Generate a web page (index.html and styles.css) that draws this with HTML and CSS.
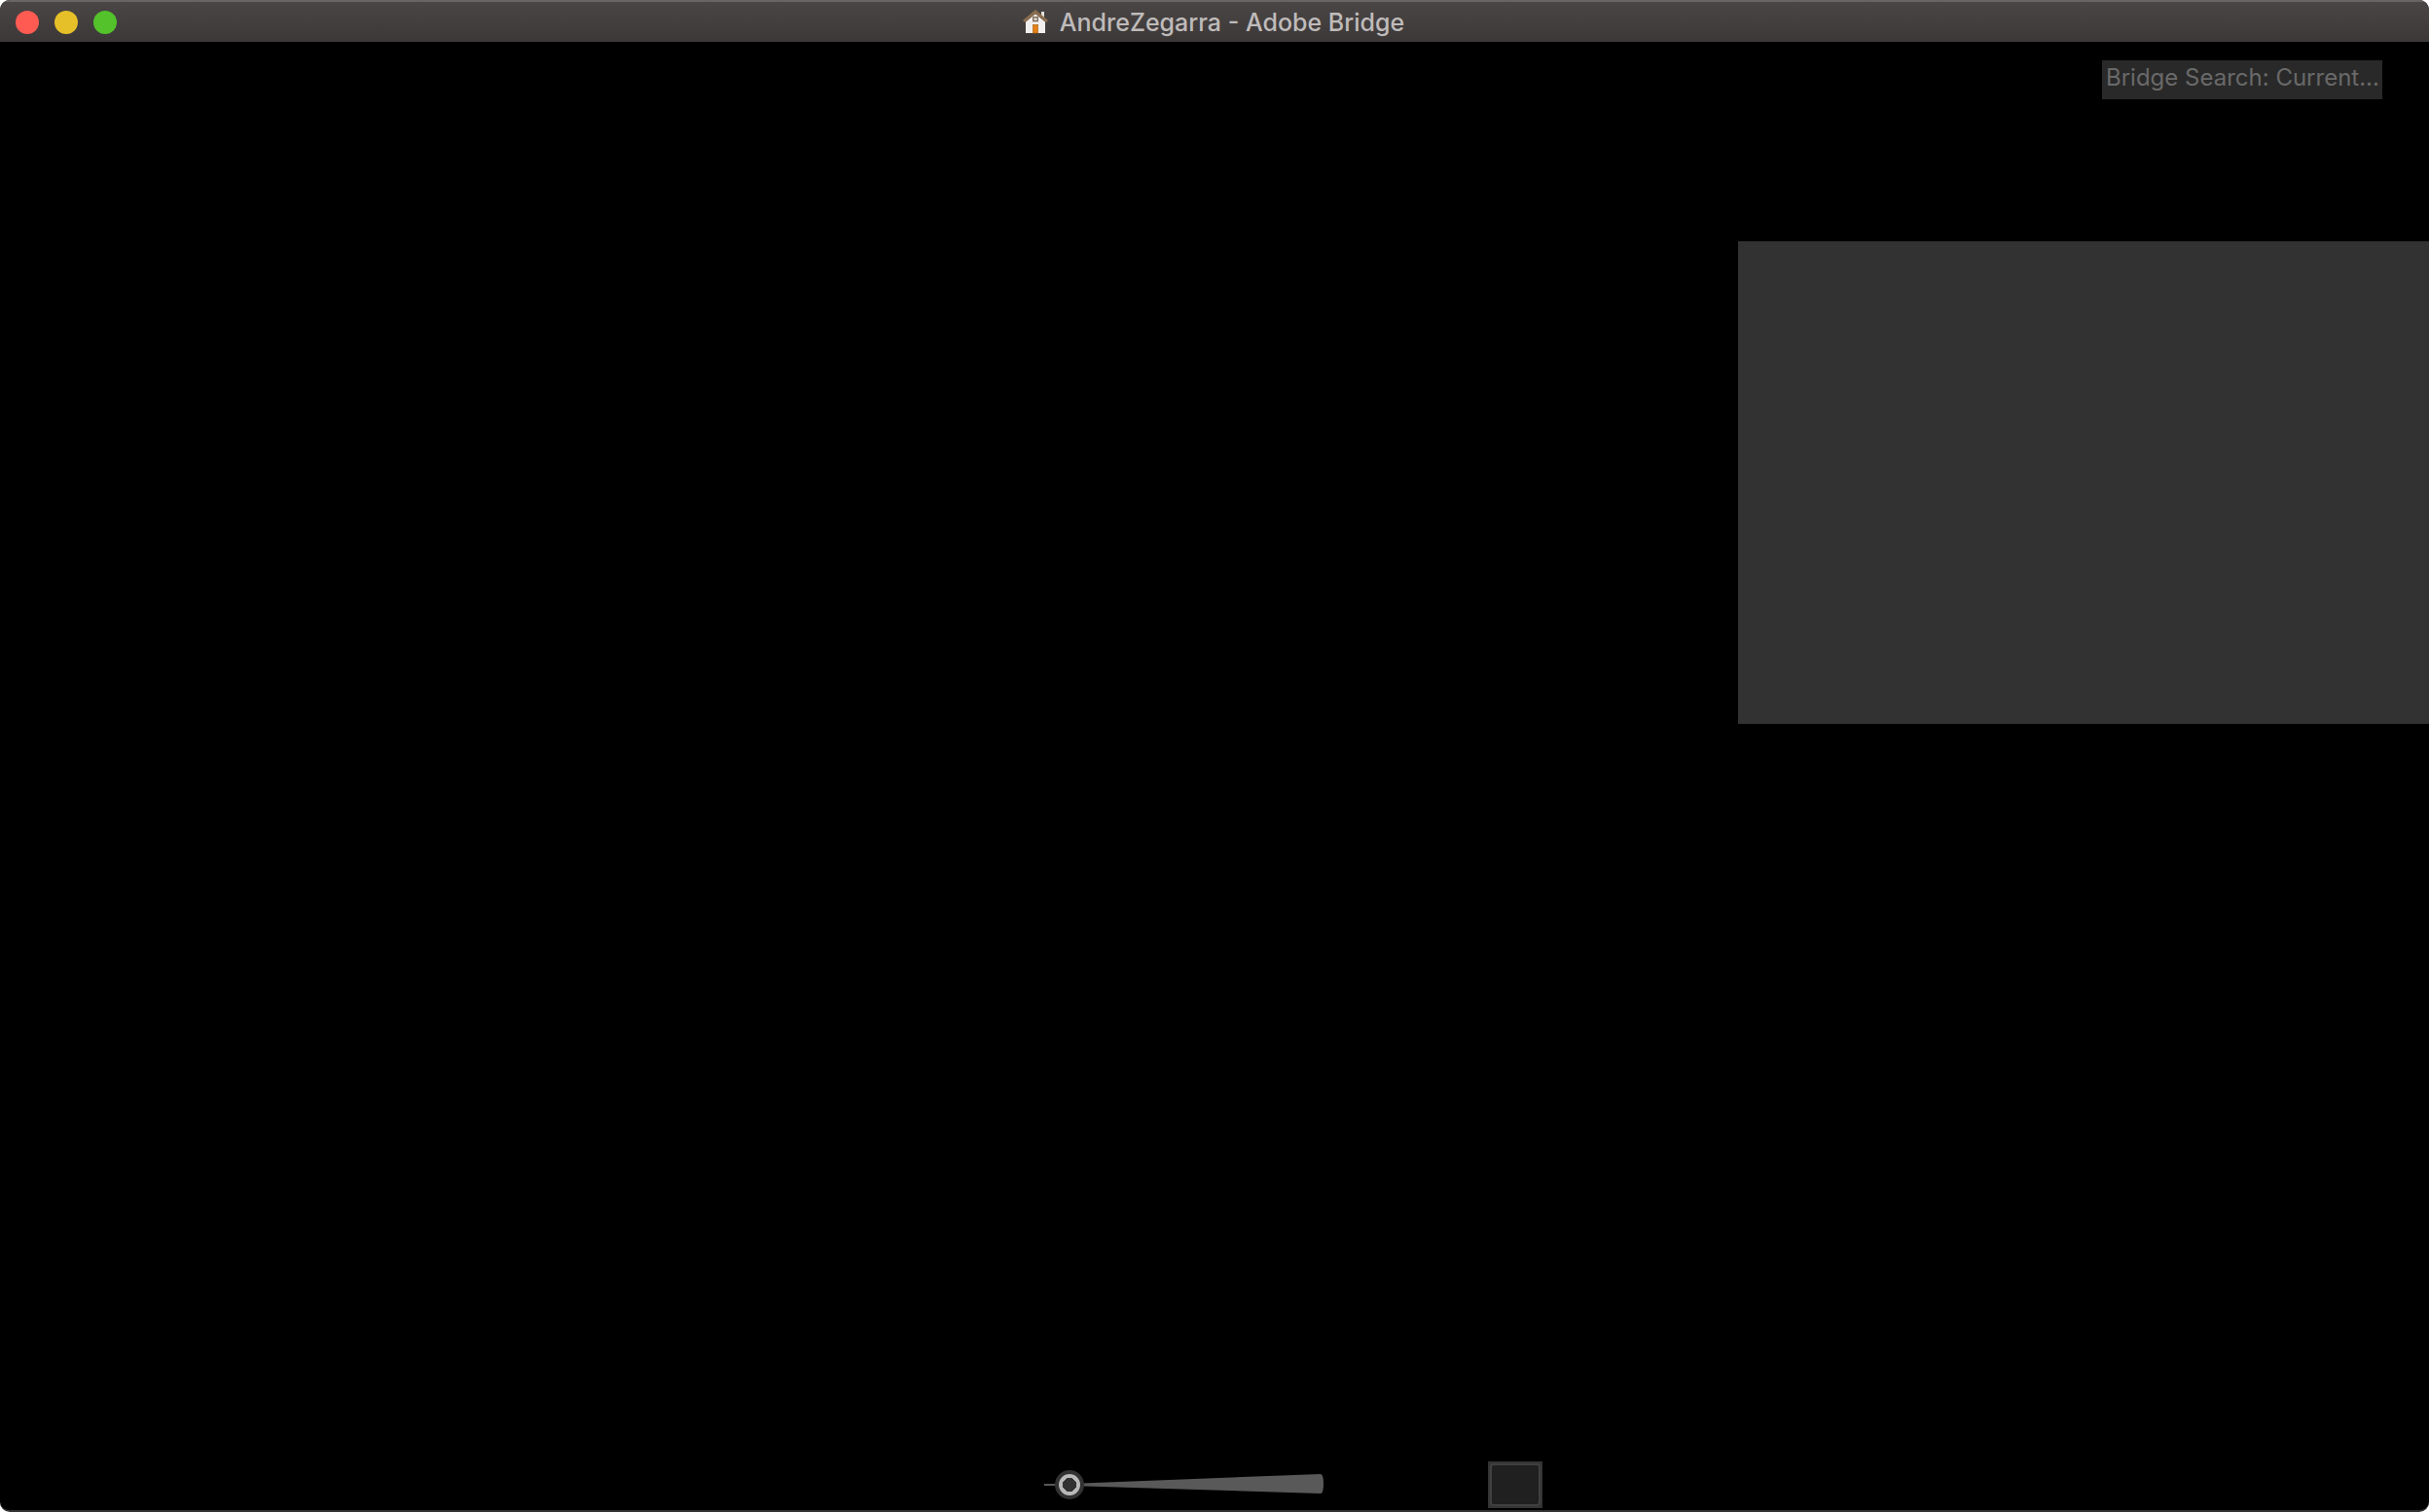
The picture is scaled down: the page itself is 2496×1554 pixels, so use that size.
FILE: index.html
```
<!DOCTYPE html>
<html lang="en">
<head>
  <meta charset="UTF-8">
  <meta name="viewport" content="width=device-width, initial-scale=1.0">
  <title>AndreZegarra - Adobe Bridge</title>
  <link rel="stylesheet" href="styles.css">
</head>
<body>
  <div class="window">
    <header class="titlebar">
      <div class="controls">
        <button type="button" class="control close" aria-label="Close"></button>
        <button type="button" class="control minimize" aria-label="Minimize"></button>
        <button type="button" class="control zoom" aria-label="Zoom"></button>
      </div>
      <h1 class="title">
        <svg class="home" viewBox="0 0 26 26" aria-hidden="true">
          <rect x="19" y="2" width="3" height="8" fill="#e4e2e0"/>
          <path d="M3 12 L13 3 L23 12 V24 H3 Z" fill="#f0efee"/>
          <path d="M0 11 L13 0 L26 11 L24 13 L13 4 L2 13 Z" fill="#8c6e4e"/>
          <path d="M2 13 L13 4 L24 13" fill="none" stroke="#654d36" stroke-width="0.7"/>
          <rect x="10.7" y="7.7" width="4.6" height="4" fill="#d6d2cc" stroke="#765f48" stroke-width="1.2"/>
          <rect x="10.3" y="15.3" width="5.4" height="8.7" fill="#e38217" stroke="#a86418" stroke-width="0.6"/>
        </svg>
        AndreZegarra - Adobe Bridge
      </h1>
    </header>

    <div class="toolbar">
      <input type="text" class="search" placeholder="Bridge Search: Current..." aria-label="Bridge Search">
    </div>

    <main class="content">
      <section class="preview" aria-label="Preview"></section>
    </main>

    <footer class="statusbar">
      <div class="slider">
        <svg class="slider-track" viewBox="0 0 288 30" aria-hidden="true">
          <path d="M0 14 H26 L284 4 Q287 4 287 14 Q287 24 284 24 L26 16 H0 Z" fill="#595959"/>
        </svg>
        <input type="range" class="slider-input" min="0" max="100" value="4" aria-label="Thumbnail size">
      </div>
      <button type="button" class="view-button" aria-label="Thumbnail view"></button>
    </footer>
  </div>
</body>
</html>
```

FILE: styles.css
```
*,
*::before {
  box-sizing: border-box;
}
body {
  margin: 0;
  background: #fff;
  font-family: Inter, "Liberation Sans", sans-serif;
}
.window {
  display: flex;
  flex-direction: column;
  min-height: 100vh;
  background: #000;
  border-bottom: 2px solid #343234;
  border-radius: 10px;
  overflow: hidden;
}

/* title bar */
.titlebar {
  display: grid;
  grid-template-columns: 1fr auto 1fr;
  align-items: center;
  height: 43px;
  padding: 0 16px;
  background: linear-gradient(#4a4645, #3c3838);
  border-top: 2px solid #686564;
}
.controls {
  display: flex;
  gap: 16px;
}
.control {
  width: 24px;
  height: 24px;
  padding: 0;
  border: none;
  border-radius: 50%;
}
.close {
  background: #ff5b52;
}
.minimize {
  background: #e6c029;
}
.zoom {
  background: #53c22b;
}
.title {
  display: flex;
  align-items: center;
  gap: 12px;
  margin: 0;
  padding-right: 2px;
  font-size: 25px;
  font-weight: 500;
  line-height: 40px;
  color: #bfbbba;
  white-space: nowrap;
}
.home {
  width: 26px;
  height: 26px;
}

/* search */
.toolbar {
  display: flex;
  justify-content: flex-end;
  padding: 19px 48px 0 0;
}
.search {
  width: 288px;
  height: 40px;
  padding: 0 0 6px 4px;
  border: none;
  border-radius: 0;
  background: #292929;
  font: 24px Inter, "Liberation Sans", sans-serif;
  color: #ccc;
}
.search::placeholder {
  color: #696969;
  opacity: 1;
}

.content {
  display: flex;
  flex: 1;
  justify-content: flex-end;
  align-items: flex-start;
  padding-top: 146px;
}
.preview {
  width: 710px;
  height: 496px;
  background: #323232;
}

/* bottom bar */
.statusbar {
  display: flex;
  align-items: center;
  gap: 168px;
  padding: 0 0 2px 43%;
}
.slider {
  display: grid;
  width: 288px;
}
.slider-track,
.slider-input {
  grid-area: 1 / 1;
  width: 100%;
  height: 30px;
}
.slider-input {
  margin: 0;
  background: transparent;
  appearance: none;
}
.slider-input::-webkit-slider-thumb {
  width: 30px;
  height: 30px;
  border: 4px solid #323232;
  border-radius: 50%;
  background: radial-gradient(circle, #323232 7px, #b8b8b8 7px);
  appearance: none;
}
.view-button {
  width: 56px;
  height: 48px;
  padding: 2px;
  border: none;
  background: #343434;
}
.view-button::before {
  content: "";
  display: block;
  height: 44px;
  border: 2px solid #404040;
  border-radius: 4px;
  background: #202020;
}
```
